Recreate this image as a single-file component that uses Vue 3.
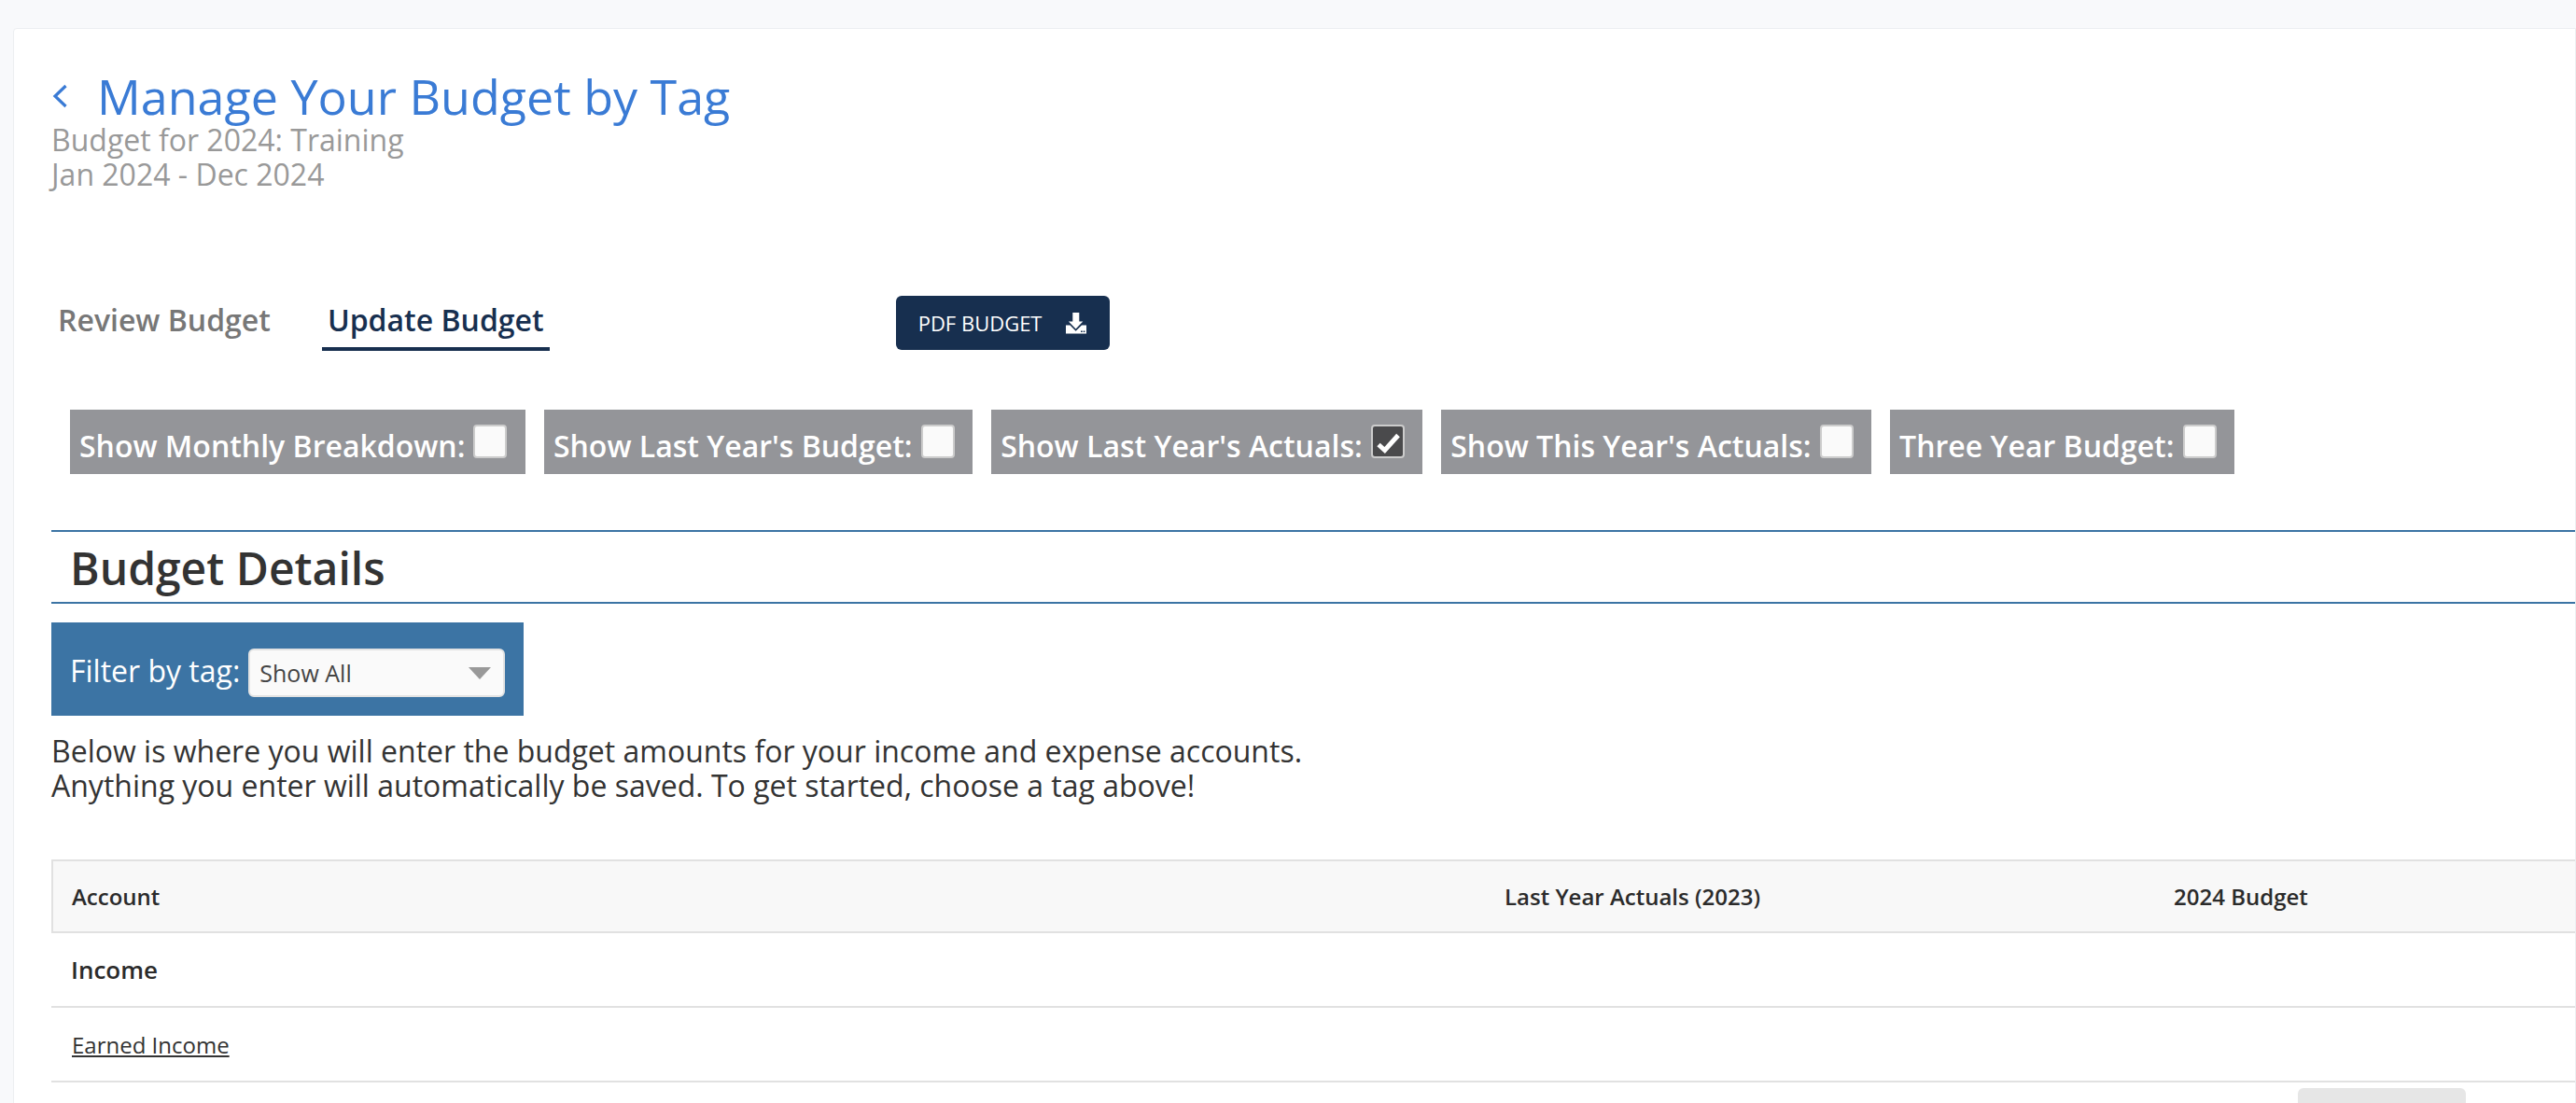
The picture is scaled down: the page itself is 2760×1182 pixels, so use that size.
<script setup>
const toggles = [
  { label: "Show Monthly Breakdown:", checked: false },
  { label: "Show Last Year's Budget:", checked: false },
  { label: "Show Last Year's Actuals:", checked: true },
  { label: "Show This Year's Actuals:", checked: false },
  { label: "Three Year Budget:", checked: false },
]
</script>

<template>
  <div class="page">
    <main class="card">
      <header class="head">
        <div class="title-row">
          <svg class="chevron" viewBox="0 0 16 26" width="16" height="26" fill="none">
            <path d="M14.5 2 3 13l11.500 11" stroke="#3a7bd5" stroke-width="3.200" />
          </svg>
          <h1>Manage Your Budget by Tag</h1>
        </div>
        <p class="sub">Budget for 2024: Training<br />Jan 2024 - Dec 2024</p>
      </header>

      <div class="tabs">
        <a class="tab">Review Budget</a>
        <a class="tab active">Update Budget</a>
        <button class="pdf">
          <span>PDF BUDGET</span>
          <svg viewBox="0 0 22 23" width="22" height="23">
            <path fill="#fff" d="M7.300 0h7v9.500h4l-7.700 8-7.700-8h4.400z" />
            <path fill="#fff" d="M0 13.500h4.500l6.100 6.200 6.400-6.200h5v9H0z" />
            <path fill="#172f4f" d="M16 19.500h1.700v1.500H16zM18.700 19.500h1.700v1.500h-1.700z" />
          </svg>
        </button>
      </div>

      <div class="toggles">
        <label v-for="t in toggles" :key="t.label" class="toggle">
          <span>{{ t.label }}</span>
          <span class="box" :class="{ on: t.checked }">
            <svg v-if="t.checked" viewBox="0 0 32 32" width="32" height="32" fill="none">
              <path d="M6 19.500l6.700 6L27 9.500" stroke="#fff" stroke-width="5" />
            </svg>
          </span>
        </label>
      </div>

      <section class="details">
        <h2>Budget Details</h2>
      </section>

      <div class="filter">
        <span class="filter-label">Filter by tag:</span>
        <div class="select">
          <span>Show All</span>
          <i class="arrow"></i>
        </div>
      </div>

      <p class="intro">
        Below is where you will enter the budget amounts for your income and expense accounts.<br />
        Anything you enter will automatically be saved. To get started, choose a tag above!
      </p>

      <div class="table">
        <div class="row thead">
          <span>Account</span>
          <span>Last Year Actuals (2023)</span>
          <span>2024 Budget</span>
        </div>
        <div class="row group"><span>Income</span></div>
        <div class="row item"><a>Earned Income</a></div>
        <div class="row-next"><div class="ghost"></div></div>
      </div>
    </main>
  </div>
</template>

<style>
html, body { margin: 0; overflow: hidden; background: #f8f9fb; }
</style>

<style scoped>
* { box-sizing: border-box; }
.page {
  height: 1182px;
  width: 2760px;
  overflow: hidden;
  padding: 30px 0 0 14px;
  font-family: "Open Sans", "Liberation Sans", sans-serif;
  color: #333;
}
.card {
  height: 1300px;
  background: #fff;
  border: 1px solid #eceef1;
  border-radius: 4px 0 0 0;
  padding: 44px 0 0 40px;
}
.title-row {
  display: flex;
  align-items: center;
  gap: 32px;
  margin-left: 1px;
  height: 56px;
}
h1 {
  margin: 0;
  font-size: 52px;
  font-weight: 400;
  line-height: 56px;
  color: #3a7bd5;
  white-space: nowrap;
}
.sub {
  margin: 0;
  font-size: 32px;
  line-height: 37px;
  color: #999;
}
.tabs {
  display: flex;
  align-items: flex-start;
  margin: 112px 0 0 0;
  height: 63px;
}
.tab {
  margin-top: 3px;
  font-size: 32px;
  font-weight: 600;
  line-height: 46px;
  padding: 0 7px 6px;
  color: #777;
}
.tab:first-child { margin-right: 48px; }
.tab.active {
  padding: 0 6px 6px;
  color: #172f4f;
  border-bottom: 4px solid #172f4f;
}
.pdf {
  display: flex;
  align-items: center;
  gap: 26px;
  width: 229px;
  height: 58px;
  margin: 0 0 0 371px;
  padding: 0 0 0 24px;
  background: #172f4f;
  color: #fff;
  border: 0;
  border-radius: 6px;
  font-family: inherit;
  font-size: 22px;
}
.toggles {
  display: flex;
  gap: 20px;
  margin: 59px 0 0 20px;
}
.toggle {
  display: flex;
  align-items: flex-start;
  gap: 9px;
  height: 69px;
  padding: 0 19.500px 0 10px;
  background: #949599;
  color: #fff;
  font-size: 32px;
  font-weight: 600;
  line-height: 46px;
  white-space: nowrap;
}
.toggle > span:first-child { padding-top: 16px; }
.box {
  display: flex;
  align-items: center;
  justify-content: center;
  flex: none;
  width: 36px;
  height: 36px;
  margin-top: 16px;
  border: 2px solid #ccc;
  border-radius: 4px;
  background: #fafafa;
}
.box.on { background: #4a4a4c; }
.details {
  height: 79px;
  margin-top: 60px;
  padding-left: 20px;
  border-top: 2px solid #3c74a4;
  border-bottom: 2px solid #3c74a4;
}
h2 {
  margin: 0;
  font-size: 48px;
  font-weight: 600;
  line-height: 77px;
  color: #333;
}
.filter {
  display: flex;
  align-items: center;
  gap: 9px;
  width: 506px;
  height: 100px;
  margin-top: 20px;
  padding-left: 20px;
  background: #3c74a4;
  color: #fff;
  font-size: 32px;
}
.filter-label { margin-top: 2px; }
.select {
  position: relative;
  width: 275px;
  height: 52px;
  margin-top: 8px;
  padding-left: 10px;
  background: #fafafa;
  border: 2px solid #e3e3e3;
  border-radius: 6px;
  color: #444;
  font-size: 25px;
  line-height: 48px;
}
.arrow {
  position: absolute;
  right: 13px;
  top: 18px;
  width: 0;
  height: 0;
  border-left: 12px solid transparent;
  border-right: 12px solid transparent;
  border-top: 13px solid #999;
}
.intro {
  margin: 19px 0 0;
  font-size: 32px;
  line-height: 37px;
  color: #333;
}
.table { margin-top: 61px; }
.row {
  display: grid;
  grid-template-columns: 1535px 717px 1fr;
  align-items: center;
  padding-left: 21px;
  border-bottom: 2px solid #e1e1e1;
  font-size: 24px;
}
.thead {
  height: 79px;
  border-top: 2px solid #e1e1e1;
  border-left: 2px solid #e1e1e1;
  padding-left: 20px;
  background: #f8f8f8;
  font-weight: 600;
  color: #2b2b2b;
}
.group { height: 80px; font-weight: 600; font-size: 26px; color: #2b2b2b; }
.item { height: 80px; padding-left: 22px; }
.item a { text-decoration: underline; color: #333; }
.row-next { position: relative; }
.ghost {
  position: absolute;
  left: 2407px;
  top: 6px;
  width: 180px;
  height: 40px;
  background: #e6e6e6;
  border-radius: 6px 6px 0 0;
}
</style>
